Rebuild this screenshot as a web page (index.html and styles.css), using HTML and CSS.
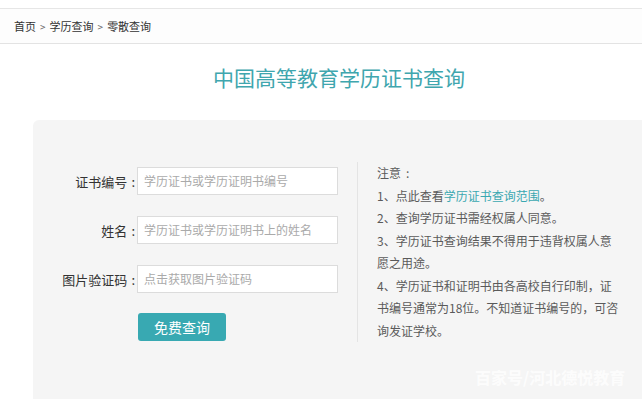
FILE: index.html
```html
<!DOCTYPE html>
<html lang="zh-CN">
<head>
<meta charset="utf-8">
<title>中国高等教育学历证书查询</title>
<link rel="stylesheet" href="styles.css">
</head>
<body>
<div class="page">
  <div class="crumbs">
    <span>首页</span><span class="sep">&gt;</span><span>学历查询</span><span class="sep">&gt;</span><span>零散查询</span>
  </div>
  <h1 class="title">中国高等教育学历证书查询</h1>
  <div class="card">
    <div class="form">
      <div class="row">
        <label class="label">证书编号<span class="colon">:</span></label>
        <div class="input">学历证书或学历证明书编号</div>
      </div>
      <div class="row">
        <label class="label">姓名<span class="colon">:</span></label>
        <div class="input">学历证书或学历证明书上的姓名</div>
      </div>
      <div class="row">
        <label class="label">图片验证码<span class="colon">:</span></label>
        <div class="input">点击获取图片验证码</div>
      </div>
      <div class="row">
        <span class="label"></span>
        <button class="btn">免费查询</button>
      </div>
    </div>
    <div class="notice">
      <p>注意<span class="colon">:</span></p>
      <p>1、点此查看<a class="link">学历证书查询范围</a>。</p>
      <p>2、查询学历证书需经权属人同意。</p>
      <p>3、学历证书查询结果不得用于违背权属人意愿之用途。</p>
      <p>4、学历证书和证明书由各高校自行印制，证书编号通常为18位。不知道证书编号的，可咨询发证学校。</p>
    </div>
    <div class="watermark">百家号/河北德悦教育</div>
  </div>
</div>
</body>
</html>
```
FILE: styles.css
```css
html, body {
  margin: 0;
  padding: 0;
  height: 399px;
  overflow: hidden;
  background: #fff;
}
body {
  font-family: "Noto Sans CJK SC", "Microsoft YaHei", sans-serif;
  color: #333;
}
.page {
  padding-top: 8px;
}
.crumbs {
  height: 34px;
  border-top: 1px solid #e6e6e6;
  border-bottom: 1px solid #e3e3e3;
  background: #fdfdfd;
  display: flex;
  align-items: center;
  padding-left: 14px;
  font-size: 11px;
  color: #333;
}
.crumbs .sep {
  color: #666;
  margin: 0 4px;
  font-size: 10px;
}
.title {
  margin: 18px 0 0;
  padding-left: 36px;
  height: 30px;
  line-height: 30px;
  text-align: center;
  font-size: 21px;
  font-weight: normal;
  color: #3fa6ae;
}
.card {
  position: relative;
  margin: 28px 0 0 33px;
  height: 279px;
  background: #f5f5f5;
  border-top-left-radius: 6px;
  display: flex;
  align-items: flex-start;
  padding-top: 42px;
  box-sizing: border-box;
}
.form {
  width: 324px;
  margin-top: 5px;
  display: flex;
  flex-direction: column;
  gap: 21px;
}
.row {
  display: flex;
  align-items: center;
}
.row:last-child {
  margin-top: -1px;
}
.label {
  width: 104px;
  flex: none;
  text-align: right;
  font-size: 13px;
  color: #333;
}
.label .colon {
  margin: 0 2px 0 4px;
}
.notice .colon {
  margin-left: 5px;
}
.input {
  width: 201px;
  height: 28px;
  box-sizing: border-box;
  border: 1px solid #dcdcdc;
  background: #fff;
  padding-left: 6px;
  font-size: 12px;
  line-height: 26px;
  color: #aaa;
  white-space: nowrap;
  overflow: hidden;
}
.btn {
  margin-left: 1px;
  width: 88px;
  height: 28px;
  border: none;
  border-radius: 3px;
  background: #38a9b2;
  color: #fff;
  font-family: inherit;
  font-size: 14px;
  padding: 0;
}
.notice {
  border-left: 1px solid #e4e4e4;
  padding-left: 19px;
  width: 244px;
  font-size: 12px;
  line-height: 22.5px;
  color: #5a5a5a;
}
.notice p {
  margin: 0;
}
.link {
  color: #3aa8b1;
}
.watermark {
  position: absolute;
  left: 442px;
  top: 245px;
  font-size: 16px;
  font-weight: bold;
  color: rgba(255, 255, 255, 0.8);
}
```
